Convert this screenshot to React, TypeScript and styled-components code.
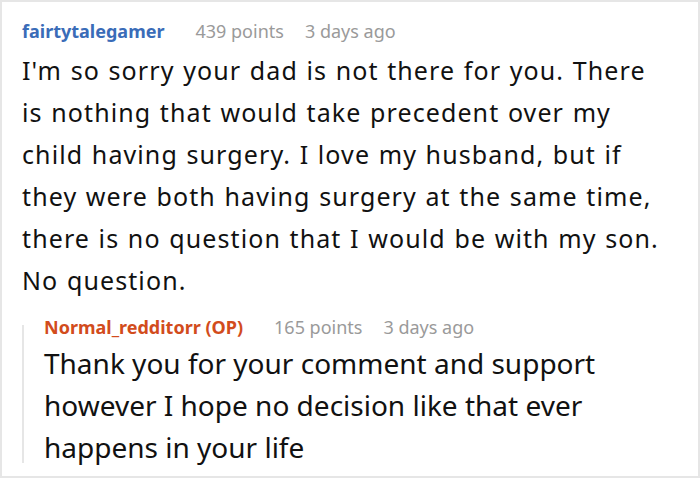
import React from "react";
import styled, { createGlobalStyle } from "styled-components";

const GlobalStyle = createGlobalStyle`
  html, body {
    margin: 0;
    padding: 0;
    background: #ffffff;
  }
  body {
    font-family: "Noto Sans", "Open Sans", sans-serif;
  }
`;

const Card = styled.div`
  box-sizing: border-box;
  width: 700px;
  height: 478px;
  border: 2px solid #e6e6e6;
  background: #fff;
  padding: 17px 34px 0 20px;
  overflow: hidden;
`;

const Comment = styled.div`
  display: flex;
  flex-direction: column;
`;

const Reply = styled.div`
  display: flex;
  gap: 20px;
  margin-top: 14px;
`;

const Rail = styled.div`
  width: 2px;
  flex: none;
  background: #e6e6e6;
  margin: 10px 0 5px 0;
`;

const Meta = styled.div`
  display: flex;
  align-items: baseline;
  gap: 21px;
  font-size: 18px;
  line-height: 24px;
  white-space: nowrap;
`;

const Author = styled.span<{ $op?: boolean }>`
  font-weight: 700;
  color: ${(p) => (p.$op ? "#d24c1c" : "#3a6cb8")};
  margin-right: 10px;
`;

const Info = styled.span`
  color: #9a9a9a;
`;

const Body = styled.p<{ $gap: number; $size: number; $tracking: number }>`
  margin: ${(p) => p.$gap}px 0 0 0;
  font-size: ${(p) => p.$size}px;
  letter-spacing: ${(p) => p.$tracking}px;
  word-spacing: ${(p) => (p.$tracking ? 1 : 0)}px;
  line-height: 42px;
  color: #111;
`;

type Entry = {
  author: string;
  points: number;
  age: string;
  op?: boolean;
  text: string;
};

const parent: Entry = {
  author: "fairtytalegamer",
  points: 439,
  age: "3 days ago",
  text: "I'm so sorry your dad is not there for you. There is nothing that would take precedent over my child having surgery. I love my husband, but if they were both having surgery at the same time, there is no question that I would be with my son. No question.",
};

const reply: Entry = {
  author: "Normal_redditorr (OP)",
  points: 165,
  age: "3 days ago",
  op: true,
  text: "Thank you for your comment and support however I hope no decision like that ever happens in your life",
};

const CommentBlock = ({
  c,
  gap,
  size,
  tracking = 0,
}: {
  c: Entry;
  gap: number;
  size: number;
  tracking?: number;
}) => (
  <Comment>
    <Meta>
      <Author $op={c.op}>{c.author}</Author>
      <Info>{c.points} points</Info>
      <Info>{c.age}</Info>
    </Meta>
    <Body $gap={gap} $size={size} $tracking={tracking}>
      {c.text}
    </Body>
  </Comment>
);

export default function App() {
  return (
    <>
      <GlobalStyle />
      <Card>
        <CommentBlock c={parent} gap={6} size={25} tracking={1.1} />
        <Reply>
          <Rail />
          <CommentBlock c={reply} gap={3} size={28} />
        </Reply>
      </Card>
    </>
  );
}
